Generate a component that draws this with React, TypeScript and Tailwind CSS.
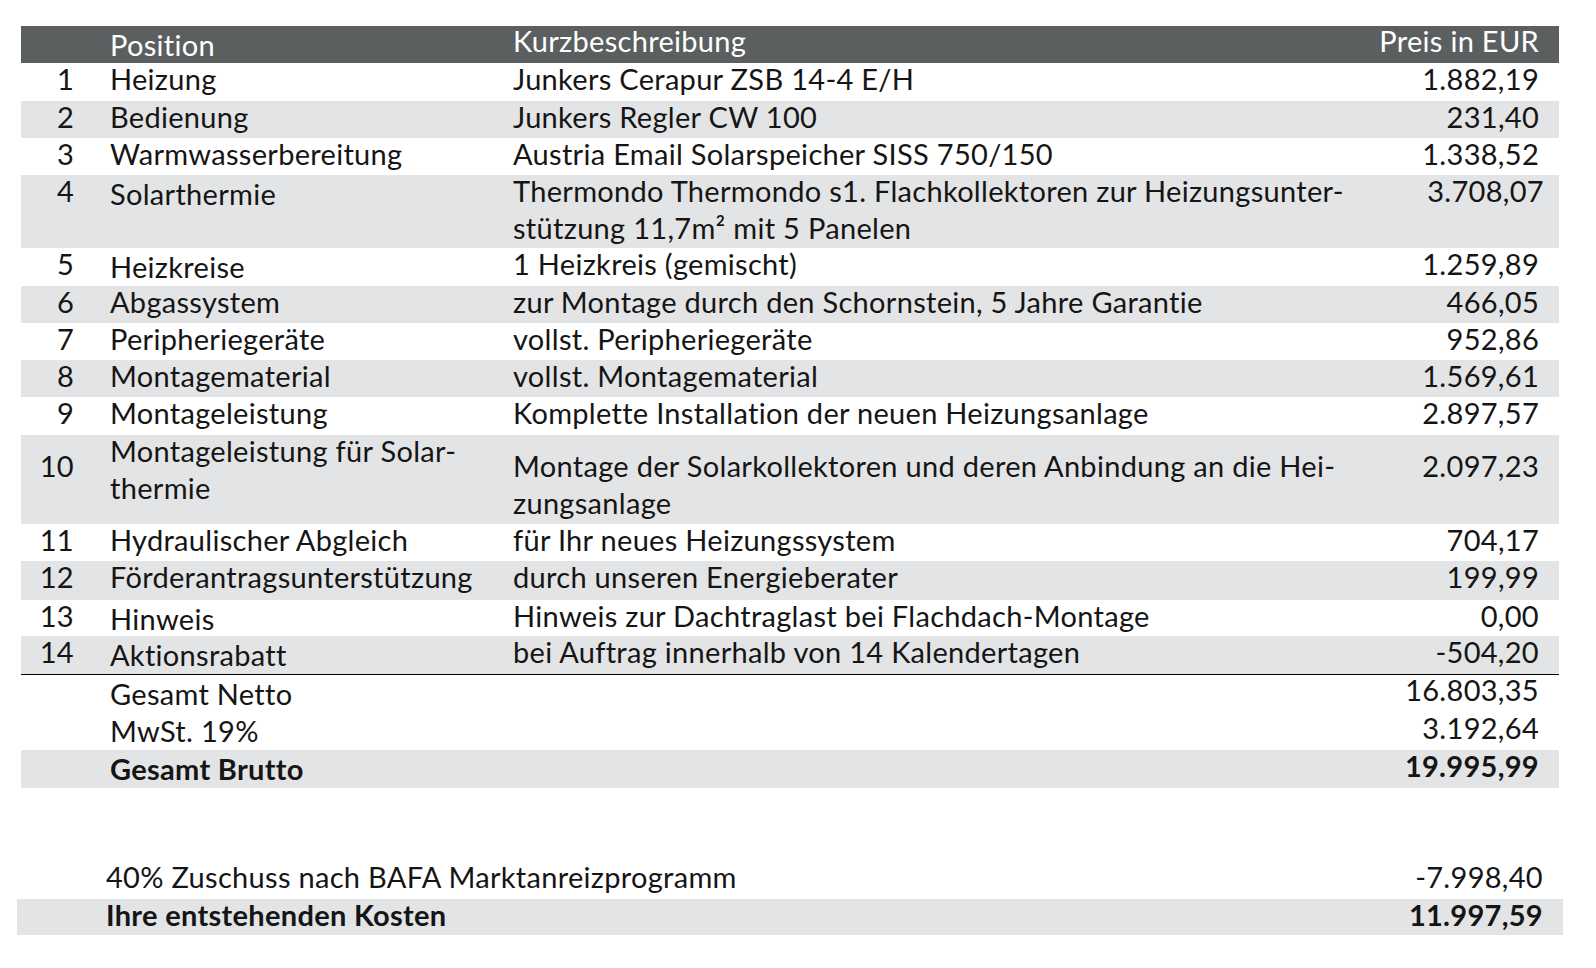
const rows = [
  { nr: "1", pos: ["Heizung"], desc: ["Junkers Cerapur ZSB 14-4 E/H"], price: "1.882,19", h: "h-[38px]" },
  { nr: "2", pos: ["Bedienung"], desc: ["Junkers Regler CW 100"], price: "231,40", h: "h-[37px]", gray: true },
  { nr: "3", pos: ["Warmwasserbereitung"], desc: ["Austria Email Solarspeicher SISS 750/150"], price: "1.338,52", h: "h-[37px]" },
  {
    nr: "4",
    pos: ["Solarthermie"],
    desc: ["Thermondo Thermondo s1. Flachkollektoren zur Heizungsunter-", "stützung 11,7m² mit 5 Panelen"],
    price: "3.708,07",
    h: "h-[73px]",
    gray: true,
    shift: true,
  },
  { nr: "5", pos: ["Heizkreise"], desc: ["1 Heizkreis (gemischt)"], price: "1.259,89", h: "h-[38px]", shift: true },
  { nr: "6", pos: ["Abgassystem"], desc: ["zur Montage durch den Schornstein, 5 Jahre Garantie"], price: "466,05", h: "h-[37px]", gray: true },
  { nr: "7", pos: ["Peripheriegeräte"], desc: ["vollst. Peripheriegeräte"], price: "952,86", h: "h-[37px]" },
  { nr: "8", pos: ["Montagematerial"], desc: ["vollst. Montagematerial"], price: "1.569,61", h: "h-[37px]", gray: true },
  { nr: "9", pos: ["Montageleistung"], desc: ["Komplette Installation der neuen Heizungsanlage"], price: "2.897,57", h: "h-[38px]" },
  {
    nr: "10",
    pos: ["Montageleistung für Solar-", "thermie"],
    desc: ["Montage der Solarkollektoren und deren Anbindung an die Hei-", "zungsanlage"],
    price: "2.097,23",
    h: "h-[89px]",
    gray: true,
    tall: true,
  },
  { nr: "11", pos: ["Hydraulischer Abgleich"], desc: ["für Ihr neues Heizungssystem"], price: "704,17", h: "h-[37px]" },
  { nr: "12", pos: ["Förderantragsunterstützung"], desc: ["durch unseren Energieberater"], price: "199,99", h: "h-[39px]", gray: true },
  { nr: "13", pos: ["Hinweis"], desc: ["Hinweis zur Dachtraglast bei Flachdach-Montage"], price: "0,00", h: "h-[36px]", shift: true },
  { nr: "14", pos: ["Aktionsrabatt"], desc: ["bei Auftrag innerhalb von 14 Kalendertagen"], price: "-504,20", h: "h-[38px]", gray: true, shift: true },
];

const font = { fontFamily: "Lato, 'Noto Sans', sans-serif" };

function Lines({ lines }: { lines: string[] }) {
  return (
    <>
      {lines.map((l) => (
        <div key={l} className="whitespace-nowrap">
          {l}
        </div>
      ))}
    </>
  );
}

export default function App() {
  return (
    <div
      className="min-h-screen bg-white text-[#151515] text-[29px] leading-[36.5px] tracking-[0.3px]"
      style={font}
    >
      <div className="pt-[26px]">
        {/* Main table */}
        <div className="ml-[21px] w-[1538px]">
          <div className="grid h-[37px] grid-cols-[89px_403px_1fr_220px] bg-[#5b5f60] text-white">
            <div />
            <div className="pt-[1px]">Position</div>
            <div className="-mt-[3px]">Kurzbeschreibung</div>
            <div className="-mt-[3px] pr-[20px] text-right">Preis in EUR</div>
          </div>

          {rows.map((r) => (
            <div
              key={r.nr}
              className={`grid grid-cols-[89px_403px_1fr_220px] ${r.h} ${r.gray ? "bg-[#e3e4e5]" : "bg-white"}`}
            >
              <div className={`pr-[36px] text-right ${r.tall ? "pt-[13px]" : "-mt-[2px]"}`}>{r.nr}</div>
              <div className={r.shift ? "pt-[1px]" : "-mt-[2px]"}>
                <Lines lines={r.pos} />
              </div>
              <div className={r.tall ? "pt-[13px]" : "-mt-[2px]"}>
                <Lines lines={r.desc} />
              </div>
              <div className={`pr-[20px] text-right ${r.tall ? "pt-[13px]" : "-mt-[2px]"}`}>{r.price}</div>
            </div>
          ))}

          <div className="h-px bg-black" />

          {/* Totals */}
          <div className="grid h-[37px] grid-cols-[89px_1fr_220px]">
            <div />
            <div className="pt-[1px]">Gesamt Netto</div>
            <div className="-mt-[3px] pr-[20px] text-right">16.803,35</div>
          </div>
          <div className="grid h-[38px] grid-cols-[89px_1fr_220px]">
            <div />
            <div className="pt-[1px]">MwSt. 19%</div>
            <div className="-mt-[2px] pr-[20px] text-right">3.192,64</div>
          </div>
          <div className="grid h-[38px] grid-cols-[89px_1fr_220px] bg-[#e3e4e5] font-bold">
            <div />
            <div className="pt-[1px]">Gesamt Brutto</div>
            <div className="-mt-[2px] pr-[20px] text-right">19.995,99</div>
          </div>
        </div>

        {/* Zuschuss */}
        <div className="ml-[17px] mt-[73px] w-[1546px]">
          <div className="flex h-[38px] items-start justify-between pl-[89px] pr-[20px]">
            <span className="-mt-[2px]">40% Zuschuss nach BAFA Marktanreizprogramm</span>
            <span className="-mt-[2px]">-7.998,40</span>
          </div>
          <div className="flex h-[36px] items-start justify-between bg-[#e3e4e5] pl-[89px] pr-[20px] font-bold">
            <span className="-mt-[2px]">Ihre entstehenden Kosten</span>
            <span className="-mt-[2px]">11.997,59</span>
          </div>
        </div>
      </div>
    </div>
  );
}
